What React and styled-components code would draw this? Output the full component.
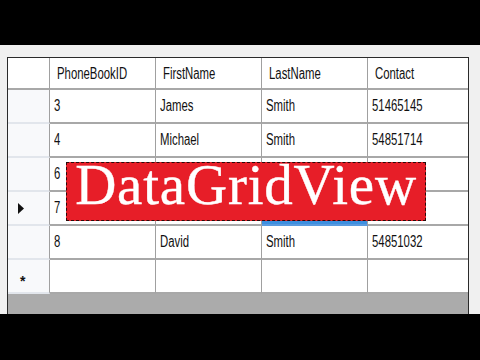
import React from "react";
import styled, { createGlobalStyle } from "styled-components";

const Global = createGlobalStyle`
  html, body { margin: 0; padding: 0; background: #000; }
  body { font-family: "Liberation Sans", Arial, sans-serif; }
`;

const Frame = styled.div`
  width: 480px;
  height: 360px;
  display: flex;
  flex-direction: column;
  background: #000;
  overflow: hidden;
`;

const Band = styled.div`
  height: ${(p) => p.h}px;
  background: #000;
  flex: none;
`;

const Window = styled.div`
  height: 269px;
  background: #f0f0f0;
  padding: 12px 11px 0 7px;
  box-sizing: border-box;
  flex: none;
`;

const Grid = styled.div`
  position: relative;
  width: 462px;
  height: 257px;
  box-sizing: border-box;
  border: 1px solid #2a2a2a;
  border-bottom: none;
  background: #ababab;
  display: grid;
  grid-template-columns: 42px 106px 106px 106px 100px;
  grid-template-rows: 32px repeat(6, 34px);
  align-content: start;
`;

const Cell = styled.div`
  box-sizing: border-box;
  background: ${(p) => (p.selected ? "#3d8fe0" : p.rowHead ? "#f8f9fb" : "#fff")};
  border-right: 1px solid #a0a0a0;
  border-bottom: 2px solid ${(p) => (p.selected ? "#5a9be0" : p.rowHead ? "#e2e6ec" : "#a8a8a8")};
  display: flex;
  align-items: center;
  padding-left: ${(p) => (p.header ? 7 : 4)}px;
  font-size: 16px;
  color: #111;
  overflow: hidden;
  &:nth-child(5n) {
    border-right: none;
  }
`;

const HeadCell = styled(Cell)`
  border-bottom: 2px solid #a8a8a8;
  padding-top: 1px;
`;

const Label = styled.span`
  display: inline-block;
  white-space: nowrap;
  transform: scaleX(0.71);
  transform-origin: left center;
`;

const Marker = styled.div`
  padding-left: ${(p) => p.x}px;
  display: flex;
  align-items: center;
`;

const Star = styled.span`
  font-size: 14px;
  font-weight: bold;
  line-height: 1;
  margin-top: 9px;
`;

const Banner = styled.div`
  position: absolute;
  left: 58px;
  top: 104px;
  width: 360px;
  height: 59px;
  box-sizing: border-box;
  background: #e71e28;
  border: 1px dashed #2a0a0a;
  display: flex;
  justify-content: center;
  align-items: flex-start;
  color: #fff;
  font-family: "Liberation Serif", "Times New Roman", serif;
  font-size: 57px;
  letter-spacing: 0.8px;
  line-height: 44px;
  -webkit-text-stroke: 0.4px #fff;
`;

const headers = ["PhoneBookID", "FirstName", "LastName", "Contact"];
const rows = [
  { id: "3", first: "James", last: "Smith", contact: "51465145" },
  { id: "4", first: "Michael", last: "Smith", contact: "54851714" },
  { id: "6", first: "", last: "", contact: "" },
  { id: "7", first: "", last: "", contact: "", current: true, selectedCol: 2 },
  { id: "8", first: "David", last: "Smith", contact: "54851032" },
];

export default function App() {
  return (
    <>
      <Global />
      <Frame>
        <Band h={45} />
        <Window>
          <Grid>
            <HeadCell />
            {headers.map((h) => (
              <HeadCell key={h} header>
                <Label>{h}</Label>
              </HeadCell>
            ))}
            {rows.map((r) => {
              const vals = [r.id, r.first, r.last, r.contact];
              return (
                <React.Fragment key={r.id}>
                  <Cell rowHead>
                    {r.current && (
                      <Marker x={6}>
                        <svg width="6" height="11" viewBox="0 0 6 11">
                          <path d="M0 0 L6 5.5 L0 11 Z" fill="#111" />
                        </svg>
                      </Marker>
                    )}
                  </Cell>
                  {vals.map((v, i) => (
                    <Cell key={i} selected={r.selectedCol === i}>
                      <Label>{v}</Label>
                    </Cell>
                  ))}
                </React.Fragment>
              );
            })}
            <Cell rowHead>
              <Marker x={8}>
                <Star>*</Star>
              </Marker>
            </Cell>
            <Cell />
            <Cell />
            <Cell />
            <Cell />
            <Banner>DataGridView</Banner>
          </Grid>
        </Window>
        <Band h={46} />
      </Frame>
    </>
  );
}
